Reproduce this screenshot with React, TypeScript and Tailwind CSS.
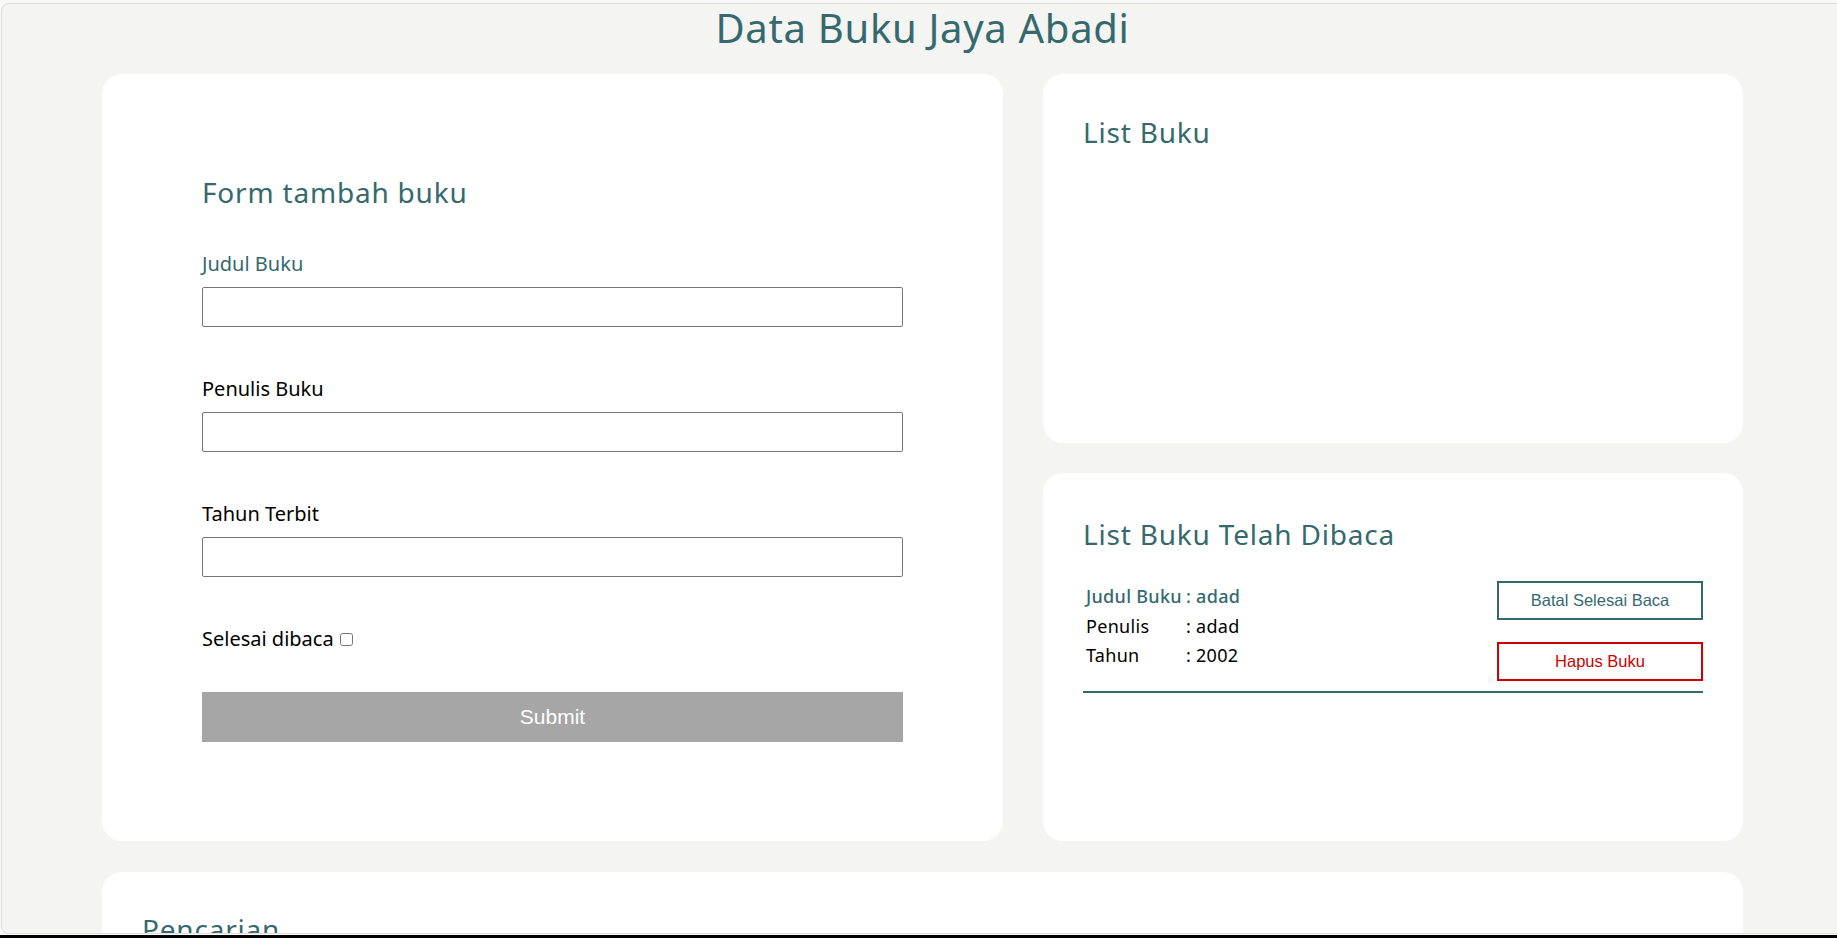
import { useState } from "react";

// --- Types ---
interface Buku {
  id: number;
  judul: string;
  penulis: string;
  tahun: number;
}

const selesaiDibaca: Buku[] = [{ id: 1, judul: "adad", penulis: "adad", tahun: 2002 }];

// --- Field input ---
const Field = ({ label, first }: { label: string; first?: boolean }) => (
  <div className={first ? "mt-[48px]" : "mt-[52px]"}>
    <label className={`block text-[20px] leading-none ${first ? "text-[#35696e]" : "text-black"}`}>
      {label}
    </label>
    <input
      type="text"
      className="mt-[13px] block h-[40px] w-full rounded-[2px] border border-[#767676] bg-white px-2 outline-none"
    />
  </div>
);

// --- Item buku yang sudah dibaca ---
const BukuItem = ({ buku }: { buku: Buku }) => (
  <div className="flex items-start justify-between border-b-2 border-[#35696e] pb-[10px]">
    <table className="border-separate border-spacing-[2px] text-[18px] leading-[25.5px] tracking-[0.3px]">
      <tbody>
        <tr className="font-medium text-[#35696e]">
          <td className="p-px">Judul Buku</td>
          <td className="p-px">: {buku.judul}</td>
        </tr>
        <tr className="text-black">
          <td className="p-px">Penulis</td>
          <td className="p-px">: {buku.penulis}</td>
        </tr>
        <tr className="text-black">
          <td className="p-px">Tahun</td>
          <td className="p-px">: {buku.tahun}</td>
        </tr>
      </tbody>
    </table>
    <div className="flex flex-col gap-[22px] font-['Liberation_Sans',Arial,sans-serif] text-[16.5px]">
      <button className="h-[39px] w-[206px] border-2 border-[#35696e] bg-white text-[#35696e]">
        Batal Selesai Baca
      </button>
      <button className="h-[39px] w-[206px] border-2 border-[#cc0000] bg-white text-[#cc0000]">
        Hapus Buku
      </button>
    </div>
  </div>
);

export default function App() {
  const [selesai, setSelesai] = useState(false);

  return (
    <div className="flex h-[938px] w-full flex-col overflow-hidden bg-[#f8f8f8] font-['Noto_Sans',sans-serif]">
      <div className="h-[3px] shrink-0" />
      <div className="ml-px h-[931px] shrink-0 rounded-l-lg border border-r-0 border-[#dedede] bg-[#f4f4f2]">
        <div className="ml-[100px] w-[1641px]">
          <h1 className="text-center text-[40px] leading-[48px] tracking-[0.7px] text-[#35696e]">
            Data Buku Jaya Abadi
          </h1>

          <div className="mt-[22px] flex gap-[40px]">
            {/* Form */}
            <div className="h-[767px] w-[901px] rounded-[20px] bg-white px-[100px] pt-[104px]">
              <h2 className="text-[28px] leading-none tracking-[0.8px] text-[#35696e]">Form tambah buku</h2>
              <Field label="Judul Buku" first />
              <Field label="Penulis Buku" />
              <Field label="Tahun Terbit" />
              <div className="mt-[52px] flex h-5 items-center text-[20px] leading-none text-black">
                <span>Selesai dibaca</span>
                <input
                  type="checkbox"
                  checked={selesai}
                  onChange={(e) => setSelesai(e.target.checked)}
                  className="ml-[6px] h-[13px] w-[13px]"
                />
              </div>
              <button className="mt-[43px] h-[50px] w-full bg-[#a6a6a6] font-['Liberation_Sans',Arial,sans-serif] text-[21px] text-white">
                Submit
              </button>
            </div>

            {/* List */}
            <div className="flex w-[700px] flex-col gap-[30px]">
              <div className="h-[369px] rounded-[20px] bg-white px-10 pt-[44px]">
                <h2 className="text-[28px] leading-none tracking-[0.8px] text-[#35696e]">List Buku</h2>
              </div>
              <div className="h-[368px] rounded-[20px] bg-white px-10 pt-[47px]">
                <h2 className="text-[28px] leading-none tracking-[0.8px] text-[#35696e]">
                  List Buku Telah Dibaca
                </h2>
                <div className="mt-[33px]">
                  {selesaiDibaca.map((b) => (
                    <BukuItem key={b.id} buku={b} />
                  ))}
                </div>
              </div>
            </div>
          </div>

          {/* Pencarian (terpotong di bawah layar) */}
          <div className="h-[92px] overflow-hidden">
            <div className="mt-[31px] h-[300px] rounded-[20px] bg-white px-10 pt-[43px]">
              <h2 className="text-[28px] leading-none tracking-[0.8px] text-[#35696e]">Pencarian</h2>
            </div>
          </div>
        </div>
      </div>
      <div className="h-px shrink-0" />
      <div className="h-[3px] shrink-0 bg-black" />
    </div>
  );
}
